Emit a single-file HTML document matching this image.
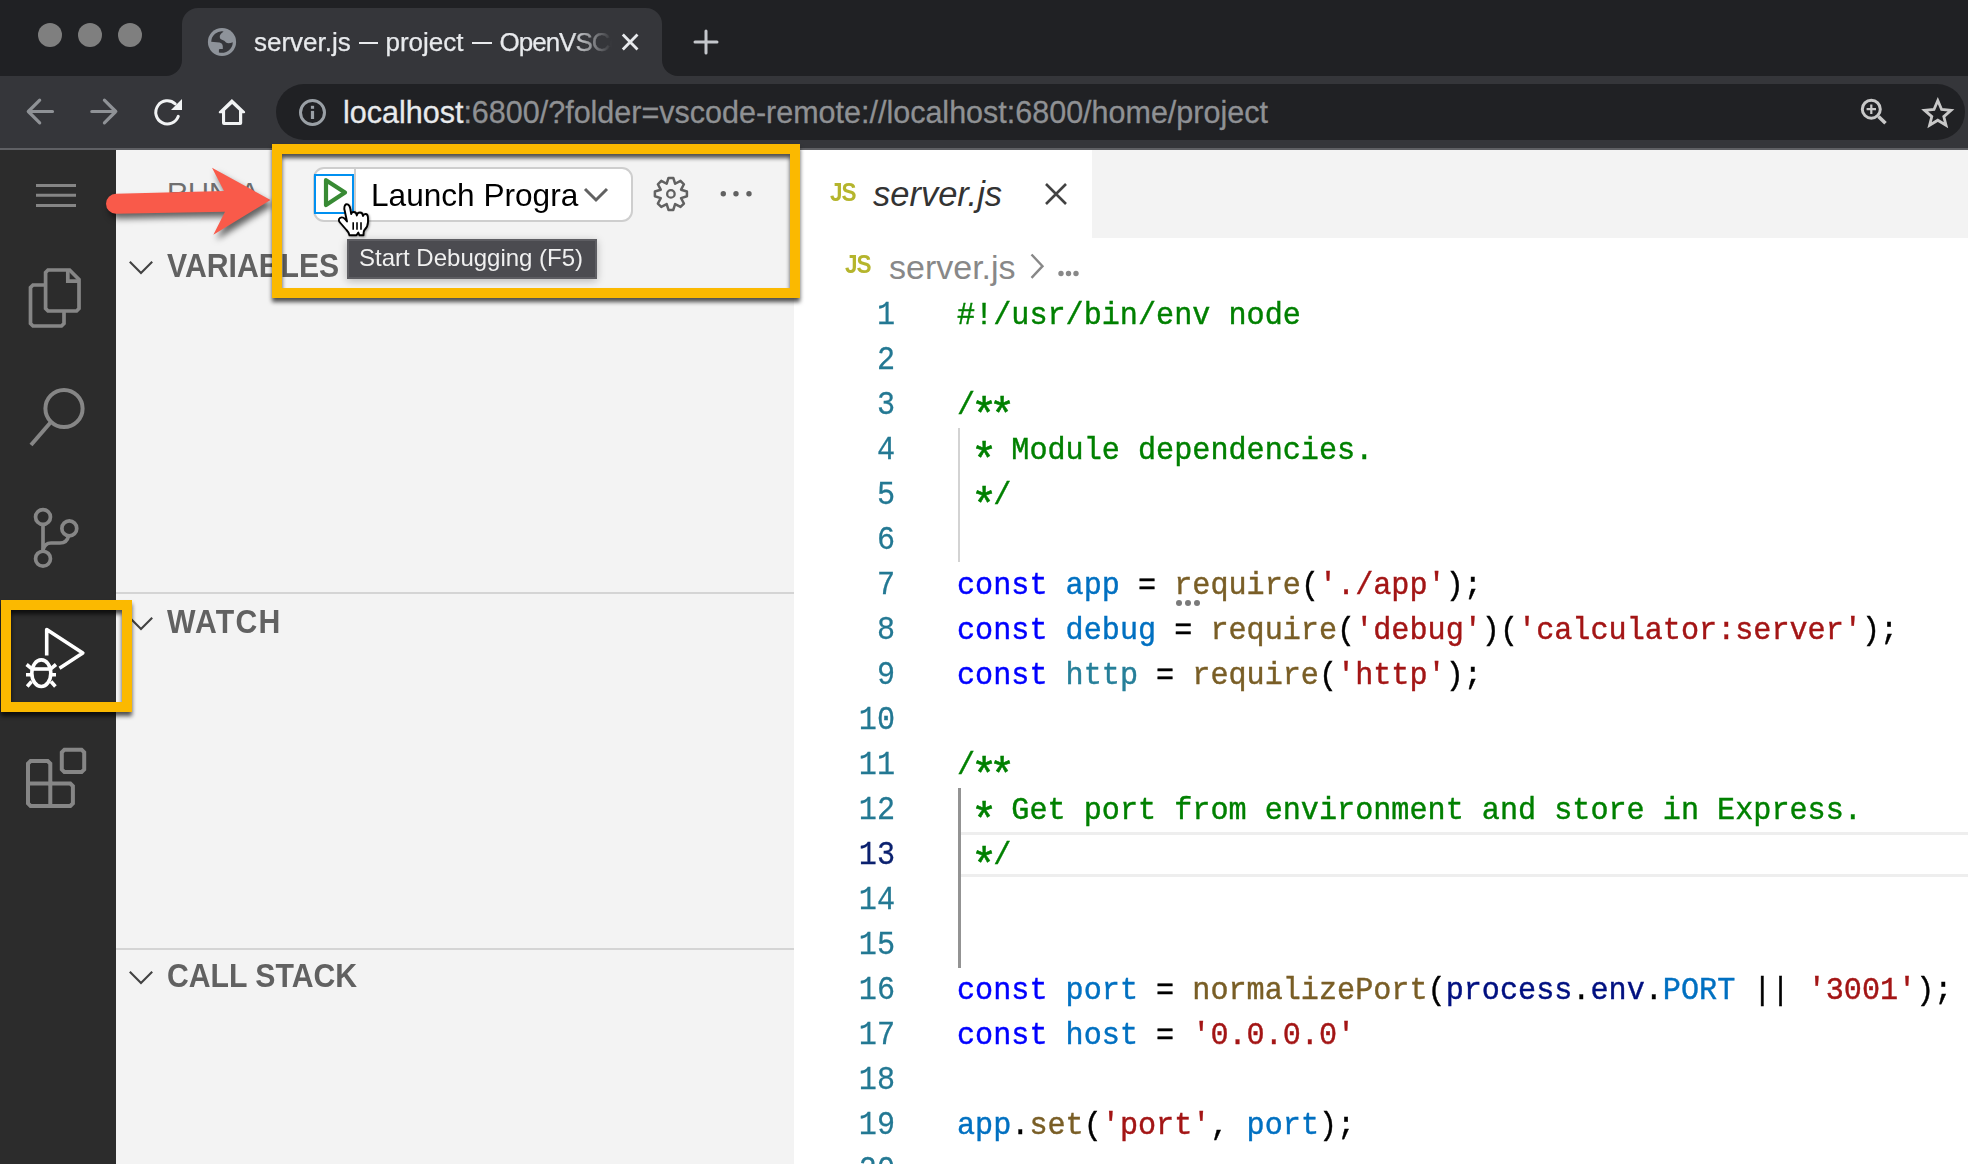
<!DOCTYPE html>
<html><head><meta charset="utf-8">
<style>
*{margin:0;padding:0;box-sizing:border-box}
html,body{width:1968px;height:1164px;overflow:hidden;background:#35363a;font-family:"Liberation Sans",sans-serif}
.a{position:absolute}
svg{position:absolute;overflow:visible}
.code{font-family:"Liberation Mono",monospace;font-size:30.17px;line-height:45px;white-space:pre;color:#000;-webkit-text-stroke:0.4px currentColor}
.ln{font-family:"Liberation Mono",monospace;font-size:30.17px;line-height:45px;color:#237893;text-align:right;width:100px}
.cl{transform:scaleY(1.06);transform-origin:0 30px}
.ln{transform:scaleY(1.11);transform-origin:0 30px;-webkit-text-stroke:0.25px currentColor}
.ast{display:inline-block;transform:translateY(12px) scale(1.45)}
.k{color:#0000ff}.v{color:#0070c1}.f{color:#795e26}.s{color:#a31515}.c{color:#008000}.t{color:#267f99}.p{color:#001080}
</style></head><body>
<!-- ===== Chrome titlebar ===== -->
<div class="a" style="left:0;top:0;width:182px;height:76px;background:#202124;border-bottom-right-radius:16px"></div>
<div class="a" style="left:662px;top:0;width:1306px;height:76px;background:#202124;border-bottom-left-radius:16px"></div>
<div class="a" style="left:170px;top:0;width:510px;height:30px;background:#202124"></div>
<div class="a" style="left:182px;top:8px;width:480px;height:68px;background:#35363a;border-radius:16px 16px 0 0"></div>
<div class="a" style="left:38px;top:23px;width:24px;height:24px;border-radius:50%;background:#7f7f7f"></div>
<div class="a" style="left:78px;top:23px;width:24px;height:24px;border-radius:50%;background:#7f7f7f"></div>
<div class="a" style="left:118px;top:23px;width:24px;height:24px;border-radius:50%;background:#7f7f7f"></div>

<div id="tabtitle" class="a" style="left:254px;top:26px;height:34px;width:360px;overflow:hidden;white-space:nowrap;font-size:26px;line-height:32px;color:#e8eaed;-webkit-text-stroke:0.25px currentColor;-webkit-mask-image:linear-gradient(90deg,#000 0,#000 316px,transparent 358px)">server.js<div class="a" style="left:104.5px;top:16px;width:19px;height:2.2px;background:#e8eaed"></div><span class="a" style="left:131.5px;top:0">project</span><div class="a" style="left:217.6px;top:16px;width:20px;height:2.2px;background:#e8eaed"></div><span class="a" style="left:245.5px;top:0;letter-spacing:-1px">OpenVSCode Server</span></div>

<!-- ===== Toolbar ===== -->
<div class="a" style="left:0;top:148px;width:1968px;height:2px;background:#5f6064"></div>
<div class="a" style="left:276px;top:84px;width:1689px;height:56px;background:#202124;border-radius:28px"></div>
<div id="url" class="a" style="left:343px;top:92.5px;height:38px;white-space:nowrap;font-size:30.5px;line-height:38px;color:#8f9194;-webkit-text-stroke:0.3px currentColor"><span style="color:#e8eaed">localhost</span>:6800/?folder=vscode-remote://localhost:6800/home/project</div>

<!-- ===== VS Code ===== -->
<div class="a" style="left:0;top:150px;width:116px;height:1014px;background:#2c2c2c"></div>
<div class="a" style="left:116px;top:150px;width:678px;height:1014px;background:#f3f3f3"></div>
<div class="a" style="left:794px;top:150px;width:1174px;height:1014px;background:#ffffff"></div>

<!-- tab bar -->
<div class="a" style="left:1092px;top:150px;width:876px;height:88px;background:#f3f3f3"></div>


<!-- editor tab -->
<div class="a" style="left:830px;top:177px;font-size:25px;font-weight:700;color:#b5b52d;letter-spacing:-1px;line-height:30px;transform:scaleX(0.9);transform-origin:0 0">JS</div>
<div class="a" style="left:873px;top:174px;font-size:34.5px;font-style:italic;color:#333;line-height:40px">server.js</div>
<svg style="left:1045px;top:183px" width="22" height="22" viewBox="0 0 22 22"><path d="M1 1L21 21M21 1L1 21" stroke="#424242" stroke-width="2.6"/></svg>
<!-- breadcrumbs -->
<div class="a" style="left:845px;top:249px;font-size:25px;font-weight:700;color:#b5b52d;letter-spacing:-1px;line-height:30px;transform:scaleX(0.9);transform-origin:0 0">JS</div>
<div class="a" style="left:889px;top:247px;font-size:34px;color:#888;line-height:40px">server.js</div>
<svg style="left:1030px;top:253px" width="16" height="26" viewBox="0 0 16 26"><path d="M1.5 1.5L12.5 13.2L1.5 24.8" stroke="#888" stroke-width="2.4" fill="none"/></svg>
<svg style="left:1050px;top:260px" width="40" height="20" viewBox="0 0 40 20"><circle cx="11" cy="13.5" r="2.7" fill="#888"/><circle cx="18.5" cy="13.5" r="2.7" fill="#888"/><circle cx="26" cy="13.5" r="2.7" fill="#888"/></svg>

<!-- line numbers -->
<div class="a ln" style="left:795px;top:294px">1</div>
<div class="a ln" style="left:795px;top:339px">2</div>
<div class="a ln" style="left:795px;top:384px">3</div>
<div class="a ln" style="left:795px;top:429px">4</div>
<div class="a ln" style="left:795px;top:474px">5</div>
<div class="a ln" style="left:795px;top:519px">6</div>
<div class="a ln" style="left:795px;top:564px">7</div>
<div class="a ln" style="left:795px;top:609px">8</div>
<div class="a ln" style="left:795px;top:654px">9</div>
<div class="a ln" style="left:795px;top:699px">10</div>
<div class="a ln" style="left:795px;top:744px">11</div>
<div class="a ln" style="left:795px;top:789px">12</div>
<div class="a ln" style="left:795px;top:834px;color:#0b216f">13</div>
<div class="a ln" style="left:795px;top:879px">14</div>
<div class="a ln" style="left:795px;top:924px">15</div>
<div class="a ln" style="left:795px;top:969px">16</div>
<div class="a ln" style="left:795px;top:1014px">17</div>
<div class="a ln" style="left:795px;top:1059px">18</div>
<div class="a ln" style="left:795px;top:1104px">19</div>
<div class="a ln" style="left:795px;top:1149px">20</div>
<!-- current line highlight -->
<div class="a" style="left:961px;top:832px;width:1007px;height:45px;border-top:3px solid #eeeeee;border-bottom:3px solid #eeeeee"></div>
<!-- indent guides -->
<div class="a" style="left:958px;top:428px;width:2px;height:134px;background:#d3d3d3"></div>
<div class="a" style="left:958px;top:788px;width:3px;height:180px;background:#939393"></div>
<!-- code -->
<div class="a" style="left:957px;top:294px">
<div class="a code cl" style="left:0;top:0px"><span class="c">#!/usr/bin/env node</span></div>
<div class="a code cl" style="left:0;top:90px"><span class="c">/<span class="ast">*</span><span class="ast">*</span></span></div>
<div class="a code cl" style="left:0;top:135px"><span class="c"> <span class="ast">*</span> Module dependencies.</span></div>
<div class="a code cl" style="left:0;top:180px"><span class="c"> <span class="ast">*</span>/</span></div>
<div class="a code cl" style="left:0;top:270px"><span class="k">const</span> <span class="v">app</span> = <span class="f">require</span>(<span class="s">'./app'</span>);</div>
<div class="a code cl" style="left:0;top:315px"><span class="k">const</span> <span class="v">debug</span> = <span class="f">require</span>(<span class="s">'debug'</span>)(<span class="s">'calculator:server'</span>);</div>
<div class="a code cl" style="left:0;top:360px"><span class="k">const</span> <span class="t">http</span> = <span class="f">require</span>(<span class="s">'http'</span>);</div>
<div class="a code cl" style="left:0;top:450px"><span class="c">/<span class="ast">*</span><span class="ast">*</span></span></div>
<div class="a code cl" style="left:0;top:495px"><span class="c"> <span class="ast">*</span> Get port from environment and store in Express.</span></div>
<div class="a code cl" style="left:0;top:540px"><span class="c"> <span class="ast">*</span>/</span></div>
<div class="a code cl" style="left:0;top:675px"><span class="k">const</span> <span class="v">port</span> = <span class="f">normalizePort</span>(<span class="p">process</span>.<span class="p">env</span>.<span class="v">PORT</span> || <span class="s">'3001'</span>);</div>
<div class="a code cl" style="left:0;top:720px"><span class="k">const</span> <span class="v">host</span> = <span class="s">'0.0.0.0'</span></div>
<div class="a code cl" style="left:0;top:810px"><span class="v">app</span>.<span class="f">set</span>(<span class="s">'port'</span>, <span class="v">port</span>);</div>
</div>
<!-- hint dots -->
<div class="a" style="left:1176px;top:600px;width:6px;height:6px;border-radius:50%;background:#7a7a7a"></div>
<div class="a" style="left:1185px;top:600px;width:6px;height:6px;border-radius:50%;background:#7a7a7a"></div>
<div class="a" style="left:1194px;top:600px;width:6px;height:6px;border-radius:50%;background:#7a7a7a"></div>

<!-- sidebar -->
<div class="a" style="left:167px;top:176px;width:90px;overflow:hidden;white-space:nowrap;font-size:29px;color:#6f6f6f;line-height:34px;word-spacing:3.5px">RUN AND DEBUG</div>
<svg style="left:130px;top:258px" width="24" height="16" viewBox="0 0 24 16"><path d="M-0.2 3.8L11 15L22.2 3.8" stroke="#424242" stroke-width="2.1" fill="none"/></svg>
<div class="a" style="left:167px;top:247.5px;font-size:30.2px;font-weight:700;color:#616161;line-height:34px;transform:scaleY(1.08);transform-origin:0 0">VARIABLES</div>
<div class="a" style="left:116px;top:592.3px;width:678px;height:2px;background:#d4d4d4"></div>
<svg style="left:130px;top:614px" width="24" height="16" viewBox="0 0 24 16"><path d="M-0.2 3.8L11 15L22.2 3.8" stroke="#424242" stroke-width="2.1" fill="none"/></svg>
<div class="a" style="left:167px;top:603.5px;font-size:30.2px;font-weight:700;color:#616161;line-height:34px;letter-spacing:1.2px;transform:scaleY(1.08);transform-origin:0 0">WATCH</div>
<div class="a" style="left:116px;top:948.3px;width:678px;height:2px;background:#d4d4d4"></div>
<svg style="left:130px;top:968px" width="24" height="16" viewBox="0 0 24 16"><path d="M-0.2 3.8L11 15L22.2 3.8" stroke="#424242" stroke-width="2.1" fill="none"/></svg>
<div class="a" style="left:167px;top:957.5px;font-size:30.2px;font-weight:700;color:#616161;line-height:34px;transform:scaleY(1.08);transform-origin:0 0">CALL STACK</div>


<!-- ===== icons (chrome + activity bar) ===== -->
<svg style="left:0;top:0" width="1968" height="1164" viewBox="0 0 1968 1164">
 <!-- globe -->
 <circle cx="222" cy="42" r="14.1" fill="#8e939a"/>
 <path d="M223.6 31.4C221.5 33 220 34.5 219.8 36C219.6 37.8 220 39.3 222.5 40C224.3 40.6 225 41.5 226 42.6C227.5 43.8 230.5 43.3 232.8 42.2A10.8 10.8 0 0 1 218.9 52.4V50C218.9 49.2 219.5 49 220.5 49H222.8V46.5C222.8 44.5 221.5 42.8 219.5 42.6L211.2 41.7A10.8 10.8 0 0 1 223.6 31.4Z" fill="#35363a"/>
 <!-- tab close -->
 <path d="M622.8 34.5L637.5 49.5M637.5 34.5L622.8 49.5" stroke="#e8eaed" stroke-width="2.8"/>
 <!-- new tab plus -->
 <path d="M706 31V53M695 42H717" stroke="#c4c7cc" stroke-width="3" stroke-linecap="round"/>
 <!-- back / forward -->
 <path d="M52.5 111.5H28.5M39.7 100.2L28.3 111.5L39.7 122.8" stroke="#8f9296" stroke-width="3.2" fill="none" stroke-linecap="round" stroke-linejoin="round"/>
 <path d="M91.8 111.5H115.8M104.4 100.2L115.8 111.5L104.4 122.8" stroke="#8f9296" stroke-width="3.2" fill="none" stroke-linecap="round" stroke-linejoin="round"/>
 <!-- reload -->
 <path d="M178.3 116.3A11.6 11.6 0 1 1 175.2 103.8" stroke="#f1f3f4" stroke-width="3" fill="none" stroke-linecap="round"/>
 <path d="M182 98.9V109.9H171Z" fill="#f1f3f4"/>
 <!-- home -->
 <path fill-rule="evenodd" fill="#f1f3f4" d="M231.9 98.9L245 111.4Q245.8 113.3 243.8 113.3H242.2V123Q242.2 125 240.2 125H224Q222 125 222 123V113.3H220.3Q218.2 113.3 219 111.4Z M232.1 103.9L239 110.5V121.9H225.1V110.5Z"/>
 <!-- info -->
 <circle cx="312.5" cy="112.5" r="12" stroke="#9aa0a6" stroke-width="3" fill="none"/>
 <rect x="310.9" y="105.8" width="3.2" height="3" fill="#9aa0a6"/>
 <rect x="310.9" y="110.9" width="3.2" height="8.1" fill="#9aa0a6"/>
 <!-- zoom -->
 <circle cx="1871.3" cy="109.2" r="9" stroke="#c8c8c8" stroke-width="3" fill="none"/>
 <path d="M1866.6 109.2H1876M1871.3 104.5V113.9" stroke="#c8c8c8" stroke-width="2.2"/>
 <path d="M1878.5 116.5L1885.5 123.2" stroke="#c8c8c8" stroke-width="3.6"/>
 <!-- star -->
 <path d="M1937.8 100.5L1941.6 109.5L1951 110.3L1943.8 116.6L1946 125.2L1937.8 120.2L1929.6 125.2L1931.8 116.6L1924.6 110.3L1934 109.5Z" stroke="#c8c8c8" stroke-width="2.8" fill="none" stroke-linejoin="miter"/>

 <!-- activity bar: menu -->
 <path d="M36 185.4H76M36 195.3H76M36 205.4H76" stroke="#858585" stroke-width="3"/>
 <!-- files -->
 <g stroke="#868686" stroke-width="3.7" fill="none" stroke-linejoin="miter">
  <path d="M48 270H69.6L79 279.4V308.6L76.6 311H48L45.6 308.6V272.4Z"/>
  <path d="M67.8 270V281.2H79"/>
  <path d="M45.6 285H33L30.5 287.5V323.5L33 326H61.5L64 323.5V311"/>
 </g>
 <!-- search -->
 <g stroke="#868686" stroke-width="4" fill="none">
  <circle cx="64" cy="408.5" r="18.6"/>
  <path d="M50.5 422.5L31 445"/>
 </g>
 <!-- scm -->
 <g stroke="#868686" stroke-width="3.7" fill="none">
  <circle cx="43" cy="517" r="7.45"/>
  <circle cx="43" cy="558.7" r="7.45"/>
  <circle cx="69.3" cy="528.4" r="7.45"/>
  <path d="M43 524.5V551.2"/>
  <path d="M68.6 535.8C67.5 540.5 64.5 543 60 543H51C47 543 44 546 43 550"/>
 </g>
 <!-- run & debug (active) -->
 <g stroke="#ffffff" stroke-width="3.6" fill="none">
  <path d="M46.7 655.5V629.5L82.8 653L59.5 668.2" stroke-linejoin="round"/>
  <ellipse cx="41.3" cy="673.2" rx="9.5" ry="13.3"/>
  <path d="M32.5 669H50.3"/>
  <path d="M26 674.8H31M51.5 674.8H56"/>
  <path d="M26.6 664.5L31.6 668.6M56 664.5L51 668.6M27.2 686.5L31.6 681.5M55.4 686.5L51 681.5"/>
 </g>
 <!-- extensions -->
 <g stroke="#868686" stroke-width="4" fill="none" stroke-linejoin="miter">
  <path d="M30.6 761H47.7L50.3 763.6V783.6H70.3L72.9 786.2V803.4L70.3 806H30.6L28 803.4V763.6Z"/>
  <path d="M28 783.6H50.3V806"/>
  <path d="M64.4 749.7H81.6L84.2 752.3V769.5L81.6 772.1H64.4L61.8 769.5V752.3Z"/>
 </g>
</svg>

<!-- ===== debug toolbar ===== -->
<div class="a" style="left:313px;top:166.5px;width:320px;height:55px;border:2px solid #cecece;border-radius:11px;background:#fff"></div>
<div class="a" style="left:354px;top:168px;width:2px;height:52px;background:#cecece"></div>
<div class="a" style="left:314px;top:174px;width:40px;height:39.5px;border:2px solid #0090f1"></div>
<svg style="left:0;top:0" width="1968" height="400" viewBox="0 0 1968 400">
 <path d="M326 180.2L345 192.6L326 205Z" stroke="#388a34" stroke-width="4.2" fill="none" stroke-linejoin="round"/>
 <path d="M585 189L596 200L607 189" stroke="#616161" stroke-width="3" fill="none"/>
 <g transform="translate(670.9 193.9)" stroke="#616161" stroke-width="2.5" fill="none" stroke-linejoin="round">
  <path d="M-4.21 -10.16 L-2.39 -16.02 L2.39 -16.02 L4.21 -10.16 L9.64 -13.02 L13.02 -9.64 L10.16 -4.21 L16.02 -2.39 L16.02 2.39 L10.16 4.21 L13.02 9.64 L9.64 13.02 L4.21 10.16 L2.39 16.02 L-2.39 16.02 L-4.21 10.16 L-9.64 13.02 L-13.02 9.64 L-10.16 4.21 L-16.02 2.39 L-16.02 -2.39 L-10.16 -4.21 L-13.02 -9.64 L-9.64 -13.02Z"/>
  <circle r="3.75" stroke-width="2.3"/>
 </g>
 <circle cx="723.3" cy="193.8" r="2.7" fill="#616161"/>
 <circle cx="736" cy="193.8" r="2.7" fill="#616161"/>
 <circle cx="749" cy="193.8" r="2.7" fill="#616161"/>
</svg>
<div class="a" style="left:371px;top:177px;font-size:31.6px;line-height:36px;color:#000;white-space:nowrap">Launch Progra</div>

<!-- tooltip -->
<div class="a" style="left:347px;top:239px;width:250px;height:40px;background:#4b4b50;border:2px solid #5d5d62;box-shadow:0 2px 8px rgba(0,0,0,.25)"></div>
<div class="a" style="left:359px;top:242px;font-size:24px;line-height:32px;color:#f0f0f0;white-space:nowrap">Start Debugging (F5)</div>

<!-- red arrow -->
<svg style="left:0;top:0;filter:drop-shadow(3px 5px 3px rgba(0,0,0,.6))" width="400" height="300" viewBox="0 0 400 300">
 <path d="M116 193.7L224 191L212 167.8L270.5 200L213.4 234.7L225 211.8L116 213.7A10 10 0 0 1 116 193.7Z" fill="#f95a4a"/>
</svg>
<!-- yellow highlight boxes -->
<div class="a" style="left:272px;top:144px;width:528px;height:154px;border:10px solid #fbb900;filter:drop-shadow(0.5px 4px 2px rgba(0,0,0,.68))"></div>
<div class="a" style="left:1px;top:600px;width:131px;height:111.5px;border:10px solid #fbb900;filter:drop-shadow(0.5px 4px 2px rgba(0,0,0,.68))"></div>



<!-- mouse cursor -->
<svg style="left:335px;top:198px;filter:drop-shadow(1px 1px 1px rgba(0,0,0,.35))" width="40" height="42" viewBox="0 0 40 42">
 <path d="M9.3 11C9.3 7.5 10.5 6.3 11.8 6.3C13.5 6.3 15 8 15.5 12L16.2 16C16.5 14.5 17.5 14 18.8 14C20.5 14 21.5 15 21.8 17.5C22 15.5 23.5 14.5 25 14.5C27 14.5 27.8 16 28 18C28.5 16.5 29.5 16 30.5 16C32 16 33 17.5 33 20.5L33 24C33 27 31.5 30 29.5 32C28.5 33 28.5 35 28.5 37.3L24.5 37.3L23.3 34.5L21.5 37.3L14.5 37.3C14.3 35 13 33.5 11.5 32L5 24.5C3.5 23 3.5 21 5 20C6.5 19 8.5 19.5 10 21L12 23.5L9.8 13Z" fill="#fff" stroke="#000" stroke-width="1.9" stroke-linejoin="round"/>
 <path d="M18.2 24.2V31.8M22 24.2V31.8M26 24.2V31.8" stroke="#000" stroke-width="1.6"/>
</svg>

</body></html>
